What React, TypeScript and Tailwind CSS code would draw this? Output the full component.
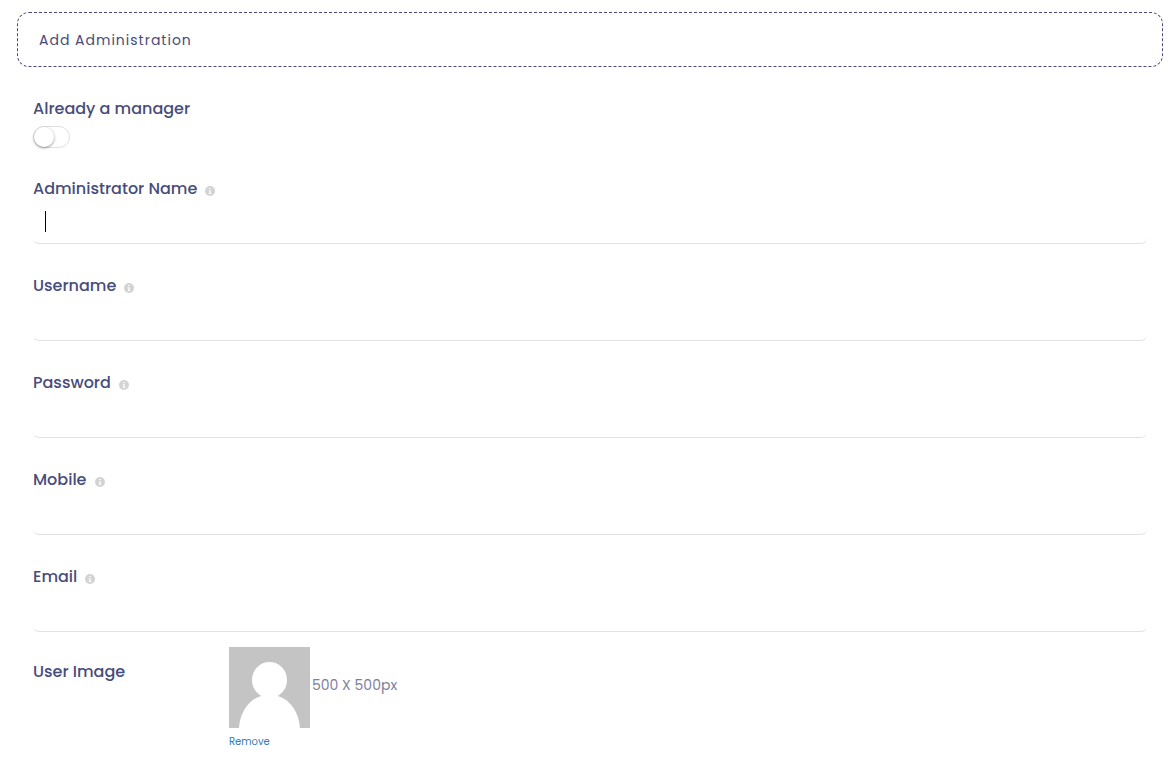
import { useState } from "react";

interface TextFieldProps {
  id: string;
  label: string;
  type?: string;
  showCaret?: boolean;
}

const InfoIcon = () => (
  <svg viewBox="0 0 10 10" className="relative top-0.5 h-2.5 w-2.5 shrink-0" aria-hidden="true">
    <circle cx="5" cy="5" r="5" fill="#d3d3d3" />
    <path d="M4.2 1.9h1.5v1.2H4.2zM3.7 4.2h2v3h.6v.8H3.7v-.8h.6V5h-.6z" fill="#fff" />
  </svg>
);

const TextField = ({ id, label, type = "text", showCaret = false }: TextFieldProps) => {
  return (
    <div>
      <div className="flex h-6 items-center gap-2">
        <label htmlFor={id} className="text-base leading-6 font-medium">
          {label}
        </label>
        <InfoIcon />
      </div>
      <div className="relative">
        <input
          id={id}
          type={type}
          autoComplete="off"
          className="block h-[43px] w-full rounded-md border-b border-[#e2e2e2] bg-transparent px-3 text-sm text-black outline-none"
        />
        {showCaret && <span className="absolute top-2.5 left-3 h-[21px] w-px bg-black"></span>}
      </div>
    </div>
  );
};

const Avatar = () => (
  <svg viewBox="0 0 81 81" className="h-[81px] w-[81px] shrink-0" role="img" aria-label="User">
    <rect width="81" height="81" fill="#c4c4c4" />
    <ellipse cx="40.5" cy="33" rx="17.5" ry="18" fill="#fff" />
    <path d="M10 81C11 66 19 53 32 49Q40.500 45 49 49C62 53 70 66 71 81Z" fill="#fff" />
  </svg>
);

const App = () => {
  const [isManager, setIsManager] = useState(false);

  return (
    <main className="min-h-screen bg-white pt-3 pr-1.5 pb-2 pl-[17px] font-['Poppins','Inter',sans-serif] text-[#484c7a]">
      {/* Page title */}
      <header className="flex h-[55px] items-center rounded-xl border border-dashed border-[#48487c] px-[21px]">
        <h1 className="text-sm tracking-[1px]">Add Administration</h1>
      </header>

      <form className="flex flex-col gap-[30px] px-4 pt-[30px]">
        {/* Manager toggle */}
        <div className="-mb-px">
          <label htmlFor="manager" className="block w-fit text-base leading-6 font-medium">
            Already a manager
          </label>
          <label className="mt-[5px] flex h-[22px] w-[37px] rounded-full border border-[#dfdfdf] bg-white">
            <input
              id="manager"
              type="checkbox"
              role="switch"
              checked={isManager}
              onChange={(e) => setIsManager(e.target.checked)}
              className="peer sr-only"
            />
            <span className="h-5 w-5 rounded-full bg-white shadow-[0_1px_3px_rgba(0,0,0,0.4)] peer-checked:ml-auto"></span>
          </label>
        </div>

        <TextField id="name" label="Administrator Name" showCaret />
        <TextField id="username" label="Username" />
        <TextField id="password" label="Password" type="password" />
        <TextField id="mobile" label="Mobile" type="tel" />
        <TextField id="email" label="Email" type="email" />

        {/* User image */}
        <div className="-mt-[15px] flex">
          <span className="w-[196px] shrink-0 pt-[13px] text-base leading-6 font-medium">User Image</span>
          <div>
            <div className="flex items-center gap-0.5">
              <Avatar />
              <span className="-mt-1.5 text-sm text-[#7c7f9c]">500 X 500px</span>
            </div>
            <a href="#" className="mt-1.5 block w-fit text-[10px] leading-4 text-[#337ab7]">
              Remove
            </a>
          </div>
        </div>
      </form>
    </main>
  );
};

export default App;
